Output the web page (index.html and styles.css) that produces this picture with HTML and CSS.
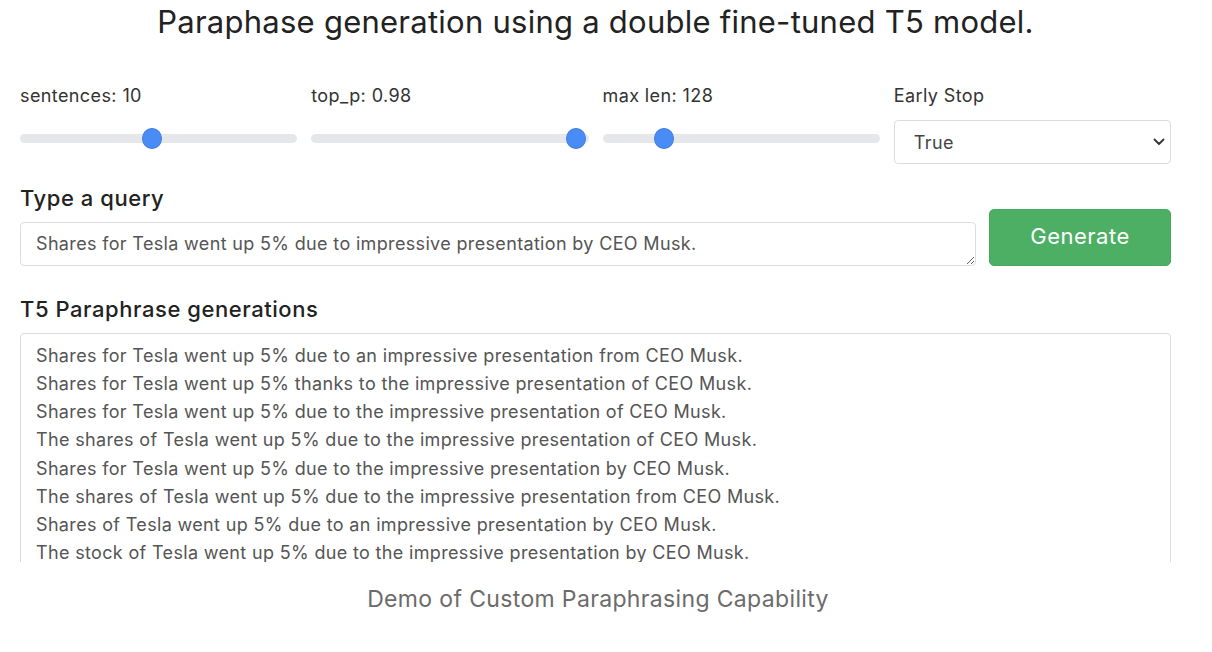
FILE: index.html
```html
<!DOCTYPE html>
<html lang="en">
<head>
<meta charset="utf-8">
<title>Paraphrase demo</title>
<link rel="stylesheet" href="styles.css">
</head>
<body>
<figure class="figure">
  <div class="screen">
    <div class="app">
      <h1 class="title">Paraphase generation using a double fine-tuned T5 model.</h1>
      <div class="controls">
        <div class="control">
          <label class="control-label">sentences: 10</label>
          <input class="range" type="range" min="1" max="20" value="10">
        </div>
        <div class="control">
          <label class="control-label">top_p: 0.98</label>
          <input class="range" type="range" min="0" max="1" step="0.01" value="0.985">
        </div>
        <div class="control">
          <label class="control-label">max len: 128</label>
          <input class="range" type="range" min="32" max="512" value="128">
        </div>
        <div class="control">
          <label class="control-label">Early Stop</label>
          <div class="select-wrap">
            <select class="select">
              <option>True</option>
              <option>False</option>
            </select>
            <svg class="chevron" width="12" height="8" viewBox="0 0 12 8"><path d="M1.5 1.5 L6 6 L10.5 1.5" fill="none" stroke="#333" stroke-width="1.8" stroke-linecap="round" stroke-linejoin="round"/></svg>
          </div>
        </div>
      </div>
      <h2 class="section">Type a query</h2>
      <div class="query-row">
        <textarea class="query" rows="1">Shares for Tesla went up 5% due to impressive presentation by CEO Musk.</textarea>
        <button class="generate">Generate</button>
      </div>
      <h2 class="section section-out">T5 Paraphrase generations</h2>
      <div class="output">
        <div class="line">Shares for Tesla went up 5% due to an impressive presentation from CEO Musk.</div>
        <div class="line">Shares for Tesla went up 5% thanks to the impressive presentation of CEO Musk.</div>
        <div class="line">Shares for Tesla went up 5% due to the impressive presentation of CEO Musk.</div>
        <div class="line">The shares of Tesla went up 5% due to the impressive presentation of CEO Musk.</div>
        <div class="line">Shares for Tesla went up 5% due to the impressive presentation by CEO Musk.</div>
        <div class="line">The shares of Tesla went up 5% due to the impressive presentation from CEO Musk.</div>
        <div class="line">Shares of Tesla went up 5% due to an impressive presentation by CEO Musk.</div>
        <div class="line">The stock of Tesla went up 5% due to the impressive presentation by CEO Musk.</div>
      </div>
    </div>
  </div>
  <figcaption class="caption">Demo of Custom Paraphrasing Capability</figcaption>
</figure>
</body>
</html>
```
FILE: styles.css
```css
* { box-sizing: border-box; }
html, body { margin: 0; padding: 0; background: #fff; }
body { font-family: "Inter", "Liberation Sans", sans-serif; }

.figure { margin: 0; width: 1196px; }

.screen {
  height: 562px;
  overflow: hidden;
}

.app {
  width: 1151px;
  margin-left: 20px;
}

.title {
  margin: 0;
  height: 44px;
  line-height: 44px;
  font-size: 31px;
  letter-spacing: 0.25px;
  font-weight: 400;
  color: #222;
  text-align: center;
}

.controls {
  margin-top: 40px;
  display: grid;
  grid-template-columns: repeat(4, 1fr);
  column-gap: 14px;
}

.control { display: flex; flex-direction: column; }

.control-label {
  display: block;
  height: 24px;
  line-height: 24px;
  font-size: 18px;
  letter-spacing: 0.4px;
  color: #333;
}

.range {
  -webkit-appearance: none;
  appearance: none;
  margin: 20px 0 0;
  width: 100%;
  height: 20px;
  background: transparent;
}
.range::-webkit-slider-runnable-track {
  height: 9px;
  border-radius: 5px;
  background: #e6e7eb;
}
.range::-webkit-slider-thumb {
  -webkit-appearance: none;
  appearance: none;
  width: 20px;
  height: 21px;
  margin-top: -6px;
  border-radius: 50%;
  background: #4a8cf5;
  border: 1px solid #3f7fe0;
}

.select-wrap {
  position: relative;
  margin-top: 12px;
  height: 44px;
}
.select {
  -webkit-appearance: none;
  appearance: none;
  width: 100%;
  height: 44px;
  padding: 0 0 0 19px;
  border: 1px solid #dcdcdc;
  border-radius: 4px;
  background: #fff;
  font-family: inherit;
  font-size: 18px;
  letter-spacing: 0.4px;
  color: #444;
}
.chevron {
  position: absolute;
  right: 6px;
  top: 18px;
}

.section {
  margin: 23px 0 0;
  height: 22px;
  line-height: 22px;
  font-size: 22px;
  letter-spacing: 0.55px;
  font-weight: 500;
  color: #222;
}
.section-out { margin-top: 32px; }

.query-row {
  display: flex;
  align-items: flex-end;
  gap: 13px;
}

.query {
  flex: 1;
  height: 44px;
  margin: 0;
  padding: 10px 15px;
  border: 1px solid #dcdcdc;
  border-radius: 4px;
  font-family: inherit;
  font-size: 18px;
  letter-spacing: 0.34px;
  line-height: 22px;
  color: #555;
  resize: vertical;
  overflow: hidden;
}

.generate {
  width: 182px;
  height: 57px;
  border: 1px solid #47a85e;
  border-radius: 5px;
  background: #4caf64;
  color: #fff;
  font-family: inherit;
  font-size: 22px;
  letter-spacing: 0.5px;
  padding: 0 0 4px;
}

.output {
  margin-top: 13px;
  border: 1px solid #dcdcdc;
  border-radius: 4px;
  padding: 8px 15px;
}
.line {
  height: 28.15px;
  line-height: 28px;
  font-size: 18px;
  letter-spacing: 0.34px;
  color: #555;
  white-space: nowrap;
}

.caption {
  margin-top: 22px;
  height: 30px;
  line-height: 30px;
  text-align: center;
  font-size: 23px;
  letter-spacing: 0.35px;
  color: #6b6b6b;
}
```
